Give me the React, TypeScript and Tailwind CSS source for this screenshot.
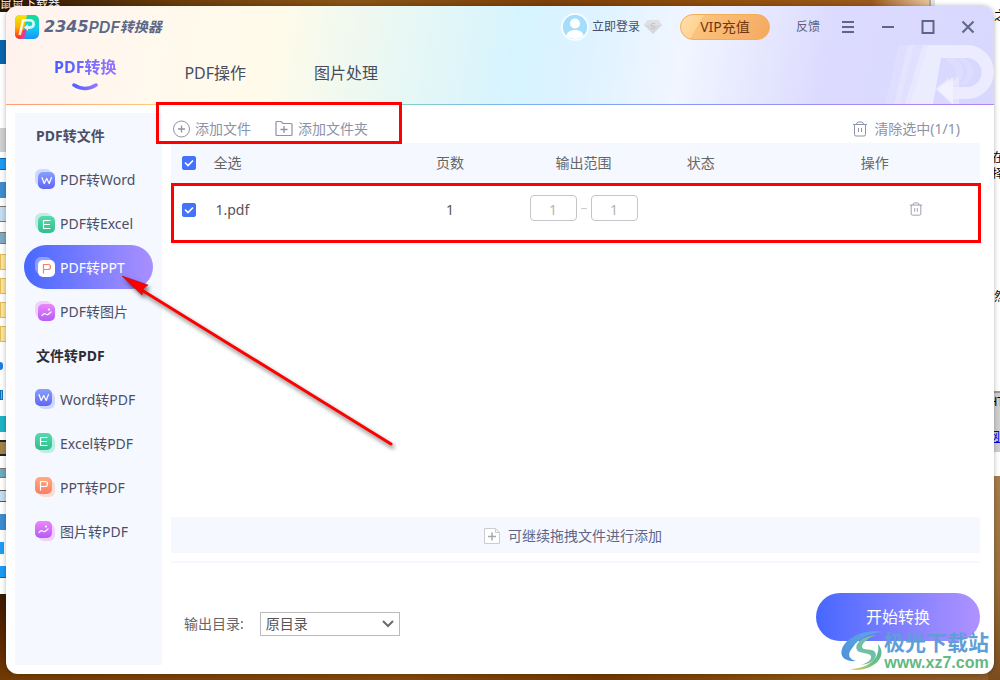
import React, { useState } from 'react';

type IconKind = 'word' | 'excel' | 'ppt' | 'image';

interface NavItem {
  label: string;
  icon: IconKind;
}

interface NavGroup {
  title: string;
  titleClass: string;
  flipped: boolean;
  items: NavItem[];
}

const NAV_GROUPS: NavGroup[] = [
  {
    title: 'PDF转文件',
    titleClass: 'text-[#4b4f66]',
    flipped: false,
    items: [
      { label: 'PDF转Word', icon: 'word' },
      { label: 'PDF转Excel', icon: 'excel' },
      { label: 'PDF转PPT', icon: 'ppt' },
      { label: 'PDF转图片', icon: 'image' },
    ],
  },
  {
    title: '文件转PDF',
    titleClass: 'text-[#2d2d33]',
    flipped: true,
    items: [
      { label: 'Word转PDF', icon: 'word' },
      { label: 'Excel转PDF', icon: 'excel' },
      { label: 'PPT转PDF', icon: 'ppt' },
      { label: '图片转PDF', icon: 'image' },
    ],
  },
];

const ICON_COLORS: Record<IconKind, { from: string; to: string }> = {
  word: { from: '#86a0ff', to: '#6266f2' },
  excel: { from: '#56d9ae', to: '#2fbf8c' },
  ppt: { from: '#ffab80', to: '#fb7d66' },
  image: { from: '#ec86f8', to: '#b45cf6' },
};

const ICON_GLYPHS: Record<IconKind, string> = {
  word: 'M4 5.500l2.200 6L8.700 6.500l2.500 5 2.300-6',
  excel: 'M12 4.500H5.500v8H12M5.500 8.500h6',
  ppt: 'M5.500 13V4.500H10q2.500 0 2.500 2.500T10 9.500H5.500',
  image: 'M4 11.500q2-2.500 3.500-1.500t2.500.500l3-2.500',
};

const FileIcon: React.FC<{ kind: IconKind; flipped: boolean; active: boolean; id: string }> = ({
  kind,
  flipped,
  active,
  id,
}) => {
  const { from, to } = ICON_COLORS[kind];
  const front = flipped ? 0 : 3;
  const back = flipped ? 3 : 0;

  return (
    <svg width="20" height="20" viewBox="0 0 20 20" className="shrink-0" aria-hidden="true">
      <defs>
        <linearGradient id={id} x1="0" y1="0" x2="0" y2="1">
          <stop offset="0" stopColor={from} />
          <stop offset="1" stopColor={to} />
        </linearGradient>
      </defs>
      <rect x={back} y={back} width="17" height="17" rx="6" fill={active ? '#fff' : from} opacity="0.35" />
      <rect x={front} y={front} width="17" height="17" rx="5" fill={active ? '#fff' : `url(#${id})`} />
      <g transform={`translate(${front} ${front})`} fill="none" stroke={active ? to : '#fff'} strokeWidth="1.2">
        <path d={ICON_GLYPHS[kind]} strokeLinejoin="round" strokeLinecap="round" />
        {kind === 'image' && <circle cx="11" cy="5.500" r="0.5" />}
      </g>
    </svg>
  );
};

const AppLogo: React.FC = () => (
  <svg width="24" height="24" viewBox="0 0 24 24" aria-hidden="true">
    <defs>
      <linearGradient id="logoLeft" x1="0" y1="0" x2="0" y2="1">
        <stop offset="0" stopColor="#f6e800" />
        <stop offset="0.5" stopColor="#ffb300" />
        <stop offset="1" stopColor="#ff2418" />
      </linearGradient>
      <linearGradient id="logoRight" x1="0" y1="0" x2="0" y2="1">
        <stop offset="0" stopColor="#16dc8c" />
        <stop offset="0.5" stopColor="#10cfe4" />
        <stop offset="1" stopColor="#1793ff" />
      </linearGradient>
      <linearGradient id="logoStem" x1="0" y1="0" x2="1" y2="1">
        <stop offset="0" stopColor="#fff" />
        <stop offset="0.6" stopColor="#fff" stopOpacity="0.8" />
        <stop offset="1" stopColor="#fff" />
      </linearGradient>
      <clipPath id="logoClip">
        <rect width="24" height="24" rx="5" />
      </clipPath>
    </defs>
    <g clipPath="url(#logoClip)">
      <rect width="24" height="24" fill="url(#logoRight)" />
      <path d="M0 0h12L7 24H0z" fill="url(#logoLeft)" />
      <path d="M5 24l3-9 4-1-3 10z" fill="#e93a8e" />
      <path d="M7 4h8a5 5 0 0 1 0 10h-2v2l-4-3.500 4-3.500v2h2a2.200 2.200 0 0 0 0-4.500H9L6 20H3.500z" fill="url(#logoStem)" />
    </g>
  </svg>
);

const HeaderMark: React.FC = () => (
  <svg
    width="109"
    height="59"
    viewBox="0 0 109 59"
    className="pointer-events-none absolute right-0 bottom-px"
    aria-hidden="true"
  >
    <g fill="#fff">
      <path d="M14 0h9L9 59H0z" opacity="0.14" />
      <path d="M23 0h6L15 59H9z" opacity="0.3" />
      <path d="M29 0h14L25 59H15z" opacity="0.2" />
      <path d="M38 0h5L25 59h-5z" opacity="0.25" />
      <path
        d="M43 0H82a27 27 0 0 1 0 54H68v5L52 44l16-12v10h14a14 14 0 0 0 0-29H56L48 59H25z"
        opacity="0.5"
      />
      <path d="M62 13h5a14 14 0 0 1 2 27l-4-3a11 11 0 0 0-3-20z" opacity="0.14" />
      <path d="M70 13h5a14 14 0 0 1 4 27h-6a14 14 0 0 0-3-27z" opacity="0.14" />
      <path d="M50 44l14-12v8l10-9v11h-6v12h6v5h-8z" opacity="0.3" />
    </g>
  </svg>
);

const TrashIcon: React.FC<{ size: number }> = ({ size }) => (
  <svg width={size} height={size} viewBox="0 0 16 16" fill="none" stroke="currentColor" aria-hidden="true">
    <path d="M1 3.500h14M4.500 3.500q0-2.500 2-2.500h3q2 0 2 2.500M2.500 3.500V13.500a1.500 1.500 0 0 0 1.500 1.500h8a1.500 1.500 0 0 0 1.500-1.500V3.500M6.500 7v4M9.500 7v4" />
  </svg>
);

const Checkbox: React.FC<{ label: string; checked: boolean; onChange: () => void }> = ({
  label,
  checked,
  onChange,
}) => (
  <span className="relative block h-3.5 w-3.5">
    <input
      type="checkbox"
      aria-label={label}
      checked={checked}
      onChange={onChange}
      className="block h-3.5 w-3.5 appearance-none rounded-xs border border-[#4472fb] bg-white checked:bg-[#4472fb]"
    />
    <svg
      viewBox="0 0 14 14"
      className="pointer-events-none absolute inset-0"
      fill="none"
      stroke="#fff"
      strokeWidth="1.6"
      aria-hidden="true"
    >
      <path d="M3 6.500l3 3 5-5" />
    </svg>
  </span>
);

// What shows around the edges of the window
const Desktop: React.FC = () => (
  <div className="absolute inset-0 overflow-hidden bg-[linear-gradient(90deg,#2c1703,#6b3d0c_18%,#8a5416_35%,#7d4008_55%,#93500f_75%,#a5652c)]" aria-hidden="true">
    <div className="absolute inset-x-0 bottom-0 h-3 bg-[linear-gradient(90deg,#713b05,#80490b_40%,#6f3800_60%,#8a5310_80%,#8b5b2c)]" />
    <div className="absolute top-3 left-0 flex h-[582px] w-3 flex-col bg-white">
      <span className="mt-7 h-6 bg-[#0a64ad]" />
      <span className="mt-16 h-6 bg-[#cfcfcf]" />
      <span className="mt-1.5 h-3 border-y border-[#0668b3] bg-[#1b9cf2]" />
      <span className="mt-3 h-4 bg-[#3f8cd0]" />
      <span className="mt-2 h-4 border-y border-[#777] bg-[#c4dcee]" />
      <span className="mt-2.5 h-3 border-y border-[#777] bg-[#7fa9c4]" />
      <span className="mt-2.5 h-4 border border-[#e0bd5a] bg-[#ffe596]" />
      <span className="mt-2 h-4 border border-[#e0bd5a] bg-[#ffe596]" />
      <span className="mt-2 h-4 border border-[#e0bd5a] bg-[#ffe596]" />
      <span className="mt-2 h-4 border border-[#e0bd5a] bg-[#ffe596]" />
      <span className="mt-5 h-2 w-[3px] rounded-r-full bg-[#1c7ce0]" />
      <span className="mt-5 h-2.5 w-[3px] border border-[#1473b8] bg-[#58b9f5]" />
      <span className="mt-4 h-4 bg-[#1fb2c6]" />
      <span className="mt-2 h-4 border-y-2 border-[#222] bg-[#a3824a]" />
      <span className="mt-3 h-2.5 border-y border-[#777] bg-[#6fa8bf]" />
      <span className="mt-3 h-3 border-y border-[#555] bg-[#c4dcee]" />
      <span className="mt-3 h-4 bg-[#3f8cd0]" />
      <span className="mt-3 h-3 w-1 bg-[#1b9cf2]" />
      <span className="mt-3 h-3 border-b border-[#0668b3] bg-[#1b9cf2]" />
    </div>
    <div className="absolute bottom-0 left-0 h-[86px] w-3 bg-[linear-gradient(#3a1a02,#5a2500_50%,#713b05)]" />
    <div className="absolute -top-1 left-0 text-xs whitespace-nowrap text-white [text-shadow:0_0_2px_#000]">
      鼠鼠下载器
    </div>
    <div className="absolute top-0 right-16 h-3 w-16 bg-[linear-gradient(90deg,transparent,#efcfa8)]" />
    <div className="absolute top-0 right-0 h-[476px] w-[71px] border-l-2 border-[#a8a8a8] bg-white">
      <div className="h-full border-l-4 border-[#e2e2e2]" />
      <span className="absolute top-2 -right-1.5 text-xs text-black">之</span>
      <span className="absolute top-[150px] -right-1 text-xs text-black">在</span>
      <span className="absolute top-[166px] -right-1 text-xs text-black">择</span>
      <span className="absolute top-[289px] -right-1.5 text-xs text-black">然</span>
      <div className="absolute top-[391px] right-0 h-[61px] w-3 border-t-2 border-[#999] bg-[#cfcfcf]" />
      <span className="absolute top-[394px] -right-1 text-xs text-black">HT</span>
      <span className="absolute top-[429px] right-0 text-xs text-[#0000ee] underline">网</span>
    </div>
    <div className="absolute right-0 bottom-0 h-[204px] w-3 bg-[linear-gradient(#a87c4c,#9a6f3e_50%,#7b4c1e)]" />
  </div>
);

const TitleBar: React.FC = () => (
  <div className="flex h-[42px] items-center pr-[19px] pl-[9px]">
    <AppLogo />
    <h1 className="ml-[5px] flex items-center text-base leading-6 font-bold text-[#5c6685] italic">
      <span className="font-['DejaVu_Sans',sans-serif]">2345</span>
      <span className="font-['Inter',sans-serif] font-semibold">PDF</span>
      <span className="text-sm leading-6">转换器</span>
    </h1>
    <div className="ml-auto flex items-center">
      <button type="button" className="flex items-center text-xs text-[#474d6b]">
        <svg width="28" height="28" viewBox="0 0 28 28" className="mr-[3px]" aria-hidden="true">
          <circle cx="14" cy="14" r="13" fill="#a5defd" stroke="#fff" strokeWidth="1.600" />
          <circle cx="14" cy="10.500" r="5" fill="#fff" />
          <path d="M5.500 23c0-8 17-8 17 0-4.500 4-12.500 4-17 0z" fill="#fff" />
        </svg>
        立即登录
      </button>
      <svg width="18" height="14" viewBox="0 0 18 14" className="ml-1" aria-hidden="true">
        <path d="M4 0h10l4 5-9 9-9-9z" fill="#d5d7dc" />
        <path d="M4 0h10l4 5H0z" fill="#dfe0e4" />
        <path d="M11 3.500H8Q6.500 5 8 6h2q1.500 1 0 2.500H7" fill="none" stroke="#c0c2c8" />
      </svg>
      <button
        type="button"
        className="ml-[18px] h-[26px] w-[90px] rounded-full border border-[#f2ad55] bg-[linear-gradient(120deg,#ffe0ae_0%,#ffd393_22%,#fcc27c_23%,#f4a95f_100%)] text-sm leading-5 text-[#6f3713]"
      >
        VIP充值
      </button>
      <button type="button" className="ml-[26px] text-xs text-[#5c6280]">
        反馈
      </button>
      <button type="button" aria-label="菜单" className="ml-[22px] text-[#5f6685]">
        <svg width="12" height="14" viewBox="0 0 12 14" stroke="currentColor" strokeWidth="2">
          <path d="M0 2h12M0 7h12M0 12h12" />
        </svg>
      </button>
      <button type="button" aria-label="最小化" className="ml-7 text-[#5f6685]">
        <svg width="12" height="14" viewBox="0 0 12 14" stroke="currentColor" strokeWidth="2">
          <path d="M0 7h12" />
        </svg>
      </button>
      <button type="button" aria-label="最大化" className="ml-[27px] text-[#5f6685]">
        <svg width="14" height="14" viewBox="0 0 14 14" fill="none" stroke="currentColor" strokeWidth="2">
          <rect x="1.500" y="1" width="11" height="12" />
        </svg>
      </button>
      <button type="button" aria-label="关闭" className="ml-[26px] text-[#5f6685]">
        <svg width="14" height="14" viewBox="0 0 14 14" stroke="currentColor" strokeWidth="2">
          <path d="M1.500 1.500l11 11M12.500 1.500l-11 11" />
        </svg>
      </button>
    </div>
  </div>
);

const Tabs: React.FC = () => (
  <nav className="flex flex-1 items-start pl-12 text-base leading-6 text-[#474c5e]">
    <button type="button" className="flex flex-col items-center font-bold">
      <span className="bg-linear-to-r from-[#3f5eff] to-[#9a72ff] bg-clip-text pt-[7px] text-transparent">
        PDF转换
      </span>
      <svg width="28" height="10" viewBox="0 0 28 10" className="mt-[3px]" aria-hidden="true">
        <defs>
          <linearGradient id="smile">
            <stop offset="0" stopColor="#4b66ff" />
            <stop offset="1" stopColor="#9a72ff" />
          </linearGradient>
        </defs>
        <path d="M3 3q11 7 22 0" fill="none" stroke="url(#smile)" strokeWidth="3.500" strokeLinecap="round" />
      </svg>
    </button>
    <button type="button" className="mt-[13px] ml-[68px]">
      PDF操作
    </button>
    <button type="button" className="mt-[13px] ml-[68px]">
      图片处理
    </button>
  </nav>
);

const PointerArrow: React.FC = () => (
  <svg
    width="290"
    height="190"
    viewBox="0 0 290 190"
    className="pointer-events-none absolute top-[27px] left-[103px] z-20 drop-shadow-[2px_3px_2px_rgba(0,0,0,0.55)]"
    aria-hidden="true"
  >
    <path d="M22 17L273 172" stroke="#f00" strokeWidth="3" strokeLinecap="round" />
    <path d="M4 4l26 9-5 4-1 6z" fill="#f00" stroke="#a00" strokeWidth="0.500" />
  </svg>
);

const Sidebar: React.FC = () => {
  const [active, setActive] = useState('PDF转PPT');

  return (
    <aside className="w-[147px] shrink-0 bg-[#f5f8ff]">
      {NAV_GROUPS.map((group) => (
        <section key={group.title}>
          <h2 className={`flex h-11 items-center pt-px pl-[21px] text-sm font-bold ${group.titleClass}`}>
            {group.title}
          </h2>
          <ul>
            {group.items.map((item) => {
              const isActive = item.label === active;
              return (
                <li key={item.label} className="relative px-[9px]">
                  <button
                    type="button"
                    onClick={() => setActive(item.label)}
                    className={`flex h-11 w-full items-center gap-[5px] rounded-full pl-[11px] text-sm ${
                      isActive ? 'bg-linear-to-r from-[#4767ff] to-[#a98fff] text-white' : 'text-[#4b4f66]'
                    }`}
                  >
                    <FileIcon
                      kind={item.icon}
                      flipped={group.flipped}
                      active={isActive}
                      id={`${item.icon}${group.flipped ? 'ToPdf' : 'FromPdf'}`}
                    />
                    <span className="pt-0.5">{item.label}</span>
                  </button>
                  {item.label === 'PDF转PPT' && <PointerArrow />}
                </li>
              );
            })}
          </ul>
        </section>
      ))}
    </aside>
  );
};

const Toolbar: React.FC = () => (
  <div className="relative flex h-[30px] items-center pt-px pr-5 pl-0.5 text-sm text-[#8d92a6]">
    <button type="button" className="flex items-center gap-[5px]">
      <svg width="17" height="18" viewBox="0 0 17 18" fill="none" stroke="currentColor" aria-hidden="true">
        <circle cx="8.500" cy="9" r="8" />
        <path d="M8.500 5.500v7M5 9h7" strokeWidth="1.300" />
      </svg>
      添加文件
    </button>
    <button type="button" className="ml-6 flex items-center gap-[5px]">
      <svg width="18" height="18" viewBox="0 0 18 18" fill="none" stroke="currentColor" aria-hidden="true">
        <path d="M1 14.500v-12a1 1 0 0 1 1-1h4l2 2h8a1 1 0 0 1 1 1v10a1 1 0 0 1-1 1H2a1 1 0 0 1-1-1z" strokeWidth="1.200" />
        <path d="M9 6v7M5.500 9.500h7" strokeWidth="1.300" />
      </svg>
      添加文件夹
    </button>
    <button type="button" className="ml-auto flex items-center gap-1.5">
      <TrashIcon size={16} />
      清除选中(1/1)
    </button>
    <div className="pointer-events-none absolute -top-[11px] -left-[15px] z-10 h-[42px] w-[246px] border-3 border-[#f00]" />
  </div>
);

const FileTable: React.FC = () => {
  const [checked, setChecked] = useState(true);
  const toggle = () => setChecked(!checked);
  const pageInput =
    'h-[26px] w-[47px] rounded-sm border border-[#c6c6c9] bg-white pt-0.5 text-center text-sm text-[#b4b4b8]';

  return (
    <div className="relative">
      <table className="w-full table-fixed text-sm">
        <colgroup>
          <col className="w-[5%]" />
          <col className="w-[21%]" />
          <col className="w-[17%]" />
          <col className="w-[16%]" />
          <col className="w-[13%]" />
          <col className="w-[28%]" />
        </colgroup>
        <thead>
          <tr className="h-10 bg-[#f5f8ff] text-[#666]">
            <th className="pl-[11px]">
              <Checkbox label="全选" checked={checked} onChange={toggle} />
            </th>
            <th className="pl-0.5 text-left font-normal">全选</th>
            <th className="font-normal">页数</th>
            <th className="font-normal">输出范围</th>
            <th className="font-normal">状态</th>
            <th className="pl-4 font-normal">操作</th>
          </tr>
        </thead>
        <tbody>
          <tr className="h-[54px] text-[#555]">
            <td className="pl-[11px]">
              <Checkbox label="1.pdf" checked={checked} onChange={toggle} />
            </td>
            <td className="pl-1">1.pdf</td>
            <td className="text-center">1</td>
            <td className="pb-1">
              <div className="flex items-center justify-center gap-1">
                <input aria-label="起始页" defaultValue="1" className={pageInput} />
                <span className="h-px w-1.5 bg-[#ccc]" />
                <input aria-label="结束页" defaultValue="1" className={pageInput} />
              </div>
            </td>
            <td />
            <td className="pr-[57px] pb-0.5">
              <button type="button" aria-label="删除" className="ml-auto block text-[#8d92a6]">
                <TrashIcon size={14} />
              </button>
            </td>
          </tr>
        </tbody>
      </table>
      <div className="pointer-events-none absolute top-10 -right-px left-0 h-[60px] border-3 border-[#f00]" />
    </div>
  );
};

const Footer: React.FC = () => (
  <footer className="mt-2 flex h-[113px] items-center border-t-2 border-[#f5f8ff] pb-1 pl-[13px]">
    <label htmlFor="outputDir" className="pt-3.5 text-sm text-[#666]">
      输出目录:
    </label>
    <div className="relative mt-3.5 ml-4">
      <select
        id="outputDir"
        className="block h-6 w-[140px] appearance-none border border-[#bbb] bg-white pl-[5px] text-sm leading-5 text-[#555]"
      >
        <option>原目录</option>
      </select>
      <svg
        width="12"
        height="8"
        viewBox="0 0 12 8"
        fill="none"
        stroke="#6b6b6b"
        strokeWidth="2"
        className="pointer-events-none absolute top-2 right-1.5"
        aria-hidden="true"
      >
        <path d="M1 1l5 5 5-5" />
      </svg>
    </div>
    <button
      type="button"
      className="ml-auto h-12 w-[164px] rounded-full bg-linear-to-r from-[#4767ff] to-[#b092ff] text-base text-white"
    >
      开始转换
    </button>
  </footer>
);

const Watermark: React.FC = () => (
  <div className="pointer-events-none absolute right-[11px] bottom-2 flex items-end font-bold">
    <svg width="44" height="42" viewBox="0 0 44 42" aria-hidden="true">
      <defs>
        <linearGradient id="swirlBlue" x1="0" y1="1" x2="1" y2="0">
          <stop offset="0" stopColor="#4d91d8" />
          <stop offset="1" stopColor="#5fa9e8" />
        </linearGradient>
        <linearGradient id="swirlGreen" x1="0" y1="1" x2="1" y2="0">
          <stop offset="0" stopColor="#f0c94c" />
          <stop offset="0.5" stopColor="#66c184" />
          <stop offset="1" stopColor="#52b8a0" />
        </linearGradient>
      </defs>
      <path d="M43 2C26-1 6 7 2 19c-3 9 5 13 14 12-8-2-9-7-3-14C18 9 28 3 43 2z" fill="url(#swirlBlue)" />
      <path d="M36 5c-14 1-22 9-19 15 2 4 12 2 14 6 1 4-4 7-10 9 12-1 17-8 14-13-3-4-12-1-13-5 0-4 6-9 14-12z" fill="#6fc0a4" />
      <path d="M38 14c7 8 3 18-8 23-7 3-15 4-20 2 12 0 22-5 26-12 2-4 3-8 2-13z" fill="url(#swirlGreen)" />
    </svg>
    <div className="text-center">
      <div className="text-[21px] leading-6 text-[#5f9fd8]">极光下载站</div>
      <div className="font-['Liberation_Sans',sans-serif] text-base leading-[18px] text-[#62b982]">www.xz7.com</div>
    </div>
  </div>
);

const App: React.FC = () => (
  <div className="relative flex min-h-screen p-1.5 font-['Noto_Sans','Noto_Sans_CJK_SC',sans-serif]">
    <Desktop />
    <div className="relative flex min-w-0 flex-1 flex-col rounded-xl bg-white shadow-[0_0_5px_rgba(0,0,0,0.3)]">
      <header className="relative flex h-[99px] flex-col overflow-hidden rounded-t-xl bg-[linear-gradient(100deg,#fff2ee_0%,#fff8ee_14%,#fffbea_27%,#ebf8f2_38%,#d6f4ff_52%,#dff3ff_59%,#f1f6ff_68%,#dcdafe_83%,#d8d7fe_100%)]">
        <HeaderMark />
        <TitleBar />
        <Tabs />
        <div className="h-px bg-[linear-gradient(90deg,#ff9a78,#ffd37c_18%,#86d6c0_38%,#7fa9fb_55%,#8d92fa_75%,#b182f2)]" />
      </header>
      <div className="flex flex-1 gap-[9px] pl-[9px]">
        <div className="flex pt-2 pb-[9px]">
          <Sidebar />
        </div>
        <main className="flex min-w-0 flex-1 flex-col pt-2 pr-3.5">
          <Toolbar />
          <FileTable />
          <div className="mt-auto flex h-9 items-center justify-center gap-2 bg-[#f5f8ff] pt-px pr-[5px] text-sm text-[#5f6685]">
            <svg width="16" height="16" viewBox="0 0 16 16" fill="#fff" stroke="#ccc" aria-hidden="true">
              <path d="M0.500 0.500h11l4 4v11h-15zM11.500 0.500v4h4" />
              <path d="M8 4.500v8M4 8.500h8" stroke="#a6a8b0" strokeWidth="1.500" />
            </svg>
            可继续拖拽文件进行添加
          </div>
          <Footer />
        </main>
      </div>
    </div>
    <Watermark />
  </div>
);

export default App;
